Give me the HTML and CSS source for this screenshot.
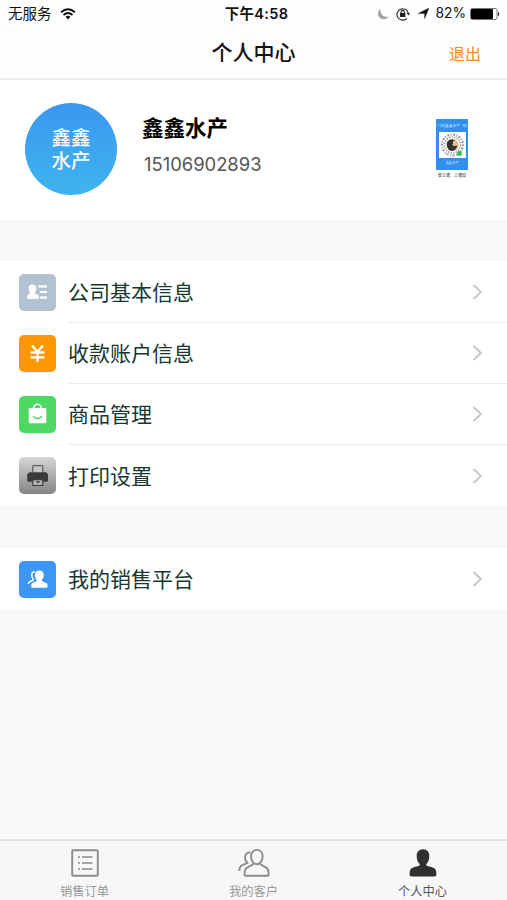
FILE: index.html
```html
<!DOCTYPE html>
<html lang="zh-CN">
<head>
  <meta charset="UTF-8" />
  <meta name="viewport" content="width=device-width, initial-scale=1.0"/>
  <title>个人中心</title>
  <link rel="stylesheet" href="styles.css">
</head>
<body>
  <div class="page">

    <header class="top">
      <div class="status">
        <div class="status-left">
          <span>无服务</span>
          <svg width="16" height="12" viewBox="0 0 16 12" fill="none" stroke="#111" stroke-width="1.9">
            <path d="M1 4.3Q8-2 15 4.3M3.5 7Q8 3.1 12.5 7"/>
            <path d="M8 11.5 5.5 8.8Q8 6.9 10.5 8.8Z" fill="#111" stroke="none"/>
          </svg>
        </div>
        <div class="time">下午4:58</div>
        <div class="status-right">
          <svg width="12" height="12" viewBox="0 0 12 12"><path d="M3.6.8A5.7 5.7 0 1 0 11.6 8.4C7 10 2.4 6 3.6.8Z" fill="#a2a2a2"/></svg>
          <svg class="lock" width="14" height="14" viewBox="0 0 14 14" fill="none" stroke="#222" stroke-width="1.1">
            <path d="M10.9 11.3A5.7 5.7 0 1 1 12.3 6.3"/>
            <path d="M10.7 6.1h3.3l-1.6 2.5Z" fill="#222" stroke="none"/>
            <rect x="4" y="6" width="5.4" height="4" fill="#222" stroke="none"/>
            <path d="M5.1 6.4V5a1.6 1.6 0 0 1 3.2 0v1.4"/>
          </svg>
          <svg class="arrow" width="11" height="11" viewBox="0 0 11 11"><path d="M11 0 6.6 10.8V5.6H0Z" fill="#111" stroke="#111" stroke-width=".3"/></svg>
          <span class="percent">82%</span>
          <svg width="30" height="12" viewBox="0 0 30 12">
            <rect x=".5" y=".5" width="26.5" height="11" rx="2" fill="#fff" stroke="#777"/>
            <rect x="1" y="1" width="22" height="10" rx="1" fill="#000"/>
            <path d="M28 3.5q2.5 2.5 0 5Z" fill="#222"/>
          </svg>
        </div>
      </div>
      <div class="nav">
        <h1>个人中心</h1>
        <a class="logout">退出</a>
      </div>
    </header>

    <section class="profile">
      <div class="avatar">鑫鑫<br>水产</div>
      <div class="user">
        <h2>鑫鑫水产</h2>
        <p>15106902893</p>
      </div>
      <div class="poster">
        <div class="poster-card">
          <span class="poster-title">门向鑫鑫水产 -码</span>
          <svg width="27" height="26" viewBox="0 0 27 26">
            <rect width="27" height="26" fill="#fff"/>
            <g fill="none" stroke="#999">
              <circle cx="13.5" cy="13" r="10.5" stroke-width="2.2" stroke-dasharray="1 1.6 2 1.3"/>
              <circle cx="13.5" cy="13" r="8" stroke-width="1.5" stroke-dasharray="1.4 1.2"/>
            </g>
            <circle cx="13.5" cy="13" r="6" fill="#c9a58b"/>
            <path d="M8 10q4-5 8-1l-3 4 5 1q-1 5-6 5-5-2-4-9Z" fill="#38302d"/>
            <path d="M14 9q5 0 5 4l-5 1Z" fill="#e6c48e"/>
            <circle cx="20.5" cy="21.5" r="2.5" fill="#35bf68"/>
          </svg>
          <span class="poster-name">鑫鑫水产</span>
        </div>
        <span class="poster-note">智立通、上通知</span>
      </div>
    </section>

    <ul class="menu">
      <li>
        <svg class="icon" viewBox="0 0 37 37">
          <rect width="37" height="37" rx="5" fill="#b2c2d2"/>
          <path d="M13.3 10.6c2.7 0 4 1.6 4 3.8 0 1.7-.5 2.900-1.400 3.800v1.200l2.800 1.300c.8.4 1 1 1 2.100v1.400q0 .8-.8.8H8.800q-.8 0-.8-.8v-1.400c0-1.100.3-1.700 1-2.100l1.900-1.100v-1.400c-.9-.9-1.400-2.100-1.400-3.800 0-2.200 1.200-3.800 3.800-3.800Z" fill="#fff"/>
          <path d="M19.5 12.3H28M21 18h7M21 23.7h7" stroke="#fff" stroke-width="2.2"/>
        </svg>
        <div class="cell"><span>公司基本信息</span><svg class="chevron" viewBox="0 0 10 16"><path d="M1 1l7.5 7L1 15"/></svg></div>
      </li>
      <li>
        <svg class="icon" viewBox="0 0 37 37">
          <rect width="37" height="37" rx="5" fill="#ff9800"/>
          <path d="M13 10.5l5.5 6.3 5.5-6.3M11.5 17.5h14M11.5 22.3h14M18.5 17v9.8" fill="none" stroke="#fff" stroke-width="2.3"/>
        </svg>
        <div class="cell"><span>收款账户信息</span><svg class="chevron" viewBox="0 0 10 16"><path d="M1 1l7.5 7L1 15"/></svg></div>
      </li>
      <li>
        <svg class="icon" viewBox="0 0 37 37">
          <rect width="37" height="37" rx="5" fill="#4bd964"/>
          <path d="M14.8 13v-1a3.7 3.7 0 0 1 7.4 0v1" fill="none" stroke="#fff" stroke-width="1.5"/>
          <rect x="9.7" y="12" width="17.6" height="15.3" rx="1" fill="#fff"/>
          <path d="M14 20q4.5 5 9 0" fill="none" stroke="#4bd964" stroke-width="1.4"/>
        </svg>
        <div class="cell"><span>商品管理</span><svg class="chevron" viewBox="0 0 10 16"><path d="M1 1l7.5 7L1 15"/></svg></div>
      </li>
      <li>
        <svg class="icon" viewBox="0 0 37 37">
          <defs>
            <linearGradient id="silver" x1="0" y1="0" x2="0" y2="1">
              <stop offset="0" stop-color="#d6d6d6"/>
              <stop offset="1" stop-color="#858585"/>
            </linearGradient>
          </defs>
          <rect width="37" height="37" rx="5" fill="url(#silver)"/>
          <path d="M13.8 16V8.7h10V16" fill="#c5c5c5" stroke="#4a4a4c"/>
          <path d="M10.5 15.2h16.5l2 2v6.2q0 1.3-1.3 1.3H9.5q-1.3 0-1.3-1.3v-6.2Z" fill="#3b3b3e"/>
          <path d="M13.8 22.8h10v5.7h-10Z" fill="#b5b5b5" stroke="#3b3b3e" stroke-width="1.1"/>
          <path d="M16.7 24.2h4.5l-2.2 2.4Z" fill="#3b3b3e"/>
        </svg>
        <div class="cell"><span>打印设置</span><svg class="chevron" viewBox="0 0 10 16"><path d="M1 1l7.5 7L1 15"/></svg></div>
      </li>
    </ul>

    <ul class="menu">
      <li>
        <svg class="icon" viewBox="0 0 37 37">
          <rect width="37" height="37" rx="5" fill="#3c96f5"/>
          <path d="M20.3 9.5c2.9 0 4.4 1.9 4.4 4.5 0 2-.7 3.8-1.9 4.8v1.3l4.4 1.9c1 .4 1.3 1.1 1.3 2.2v1.6q0 1-1 1H13.3q-1 0-1-1v-1.6c0-1.1.3-1.8 1.3-2.2l4-1.9v-1.3c-1.2-1-1.8-2.8-1.8-4.8 0-2.6 1.6-4.5 4.5-4.5Z" fill="#fff"/>
          <path d="M15.8 10.8c-2-.2-3 1.2-3 3.3 0 1.8.5 3 1.3 3.9v1.2l-3.5 1.6c-1 .5-1.2 1-1.2 2.3" fill="none" stroke="#fff" stroke-width="1.5"/>
        </svg>
        <div class="cell"><span>我的销售平台</span><svg class="chevron" viewBox="0 0 10 16"><path d="M1 1l7.5 7L1 15"/></svg></div>
      </li>
    </ul>

    <nav class="tabbar">
      <a class="tab">
        <svg width="30" height="30" viewBox="0 0 30 30" fill="none" stroke="#8c8c8c">
          <rect x="2.2" y="2.2" width="25.6" height="25.6" rx="1" stroke-width="1.9"/>
          <path d="M8 9h2m2 0h10.5M8 15h2m2 0h10.5M8 21h2m2 0h10.5" stroke-width="1.7"/>
        </svg>
        <span>销售订单</span>
      </a>
      <a class="tab">
        <svg width="32" height="30" viewBox="0 0 32 30" fill="none" stroke="#8c8c8c" stroke-width="1.9" stroke-linejoin="round">
          <path d="M18.8 1.9c3.7 0 5.8 2.9 5.8 6.6 0 4.1-2.4 7.7-5.8 7.7S13 12.6 13 8.5c0-3.7 2.1-6.6 5.8-6.6Z"/>
          <path d="M15.4 15.8c-1.2 1.7-5.3 2.6-7.2 4.5-1.6 1.5-1.7 3.7-1.7 5.9q0 1.6 1.6 1.6h21q1.6 0 1.6-1.6c0-2.2-.1-4.4-1.7-5.9-1.9-1.9-5.6-2.8-6.8-4.5"/>
          <path d="M12.2 4.5C9 4 7 6.5 7 9.3c0 2.5.8 4.3 2.6 5.7-2.3 1.2-5.4 1.8-6.9 3.2-1.2 1.2-1.3 2.7-1.3 4.8"/>
        </svg>
        <span>我的客户</span>
      </a>
      <a class="tab active">
        <svg width="30" height="30" viewBox="0 0 30 30">
          <path d="M15 1.2c4.3 0 6.3 3 6.3 6.7 0 3.5-1 6.4-3 8v1.5c1.5.9 6.4 1.3 8.4 3.1 1.5 1.4 1.7 3.4 1.7 5.7 0 1.5-.6 2.2-2 2.2H3.6c-1.4 0-2-.7-2-2.2 0-2.3.2-4.3 1.7-5.7 2-1.8 6.9-2.2 8.4-3.1v-1.5c-2-1.6-3-4.5-3-8 0-3.7 2-6.7 6.3-6.7Z" fill="#303030"/>
        </svg>
        <span>个人中心</span>
      </a>
    </nav>

  </div>
</body>
</html>
```
FILE: styles.css
```css
* {margin: 0;padding: 0;box-sizing: border-box;}

body {
  font-family: Inter, 'Noto Sans CJK SC', sans-serif;
  background: #f8f8f8;
  color: #111;
}

svg {display: block;flex-shrink: 0;}
ul {list-style: none;}

.page {
  display: flex;
  flex-direction: column;
  height: 100vh;
  min-height: 900px;
}

/* Status bar and title */
.top {
  height: 80px;
  background: #fdfdfd;
  border-bottom: 2px solid #ededed;
}

.status {
  display: grid;
  grid-template-columns: 1fr auto 1fr;
  align-items: center;
  height: 27px;
  padding: 0 7px 0 8px;
  font-size: 14.5px;
  line-height: 27px;
}

.status-left, .status-right {display: flex;align-items: center;}
.status-left {gap: 8px;}
.status-right {justify-content: flex-end;}
.time {padding-left: 5px;font-weight: 600;letter-spacing: 0.3px;}
.lock {margin-left: 7px;}
.arrow {margin-left: 8px;}
.percent {margin: 0 4px 0 7px;font-size: 13.8px;}

.nav {
  display: grid;
  grid-template-columns: 1fr auto 1fr;
  align-items: center;
  height: 51px;
  padding-right: 26px;
  padding-left: 26px;
}

.nav h1 {
  grid-column: 2;
  font-size: 21px;
  font-weight: 500;
  line-height: 51px;
}

.logout {
  justify-self: end;
  font-size: 16px;
  color: #ff8a1c;
}

/* Profile */
.profile {
  display: flex;
  height: 140px;
  padding: 23px 39px 0 25px;
  background: #fff;
}

.avatar {
  width: 92px;
  height: 92px;
  padding-top: 24px;
  border-radius: 50%;
  background: linear-gradient(#3b97f0, #3eb5ee);
  color: #fff;
  font-size: 19.5px;
  font-weight: 500;
  line-height: 23px;
  text-align: center;
}

.user {flex: 1;padding: 10px 0 0 25px;}
.user h2 {font-size: 21.5px;font-weight: 700;line-height: 30px;color: #000;}
.user p {margin-top: 7px;padding-left: 2px;font-size: 18.4px;line-height: 28px;color: #555;}

.poster {
  display: flex;
  flex-direction: column;
  align-items: center;
  width: 32px;
  padding-top: 16px;
  white-space: nowrap;
}

.poster-card {
  display: flex;
  flex-direction: column;
  align-items: center;
  width: 32px;
  height: 51px;
  background: #318ff1;
  color: #d9ebff;
}

.poster-title {font-size: 3.8px;line-height: 13px;}
.poster-name {font-size: 3.2px;line-height: 11px;}
.poster-note {font-size: 4px;line-height: 12px;color: #333;}

/* Menu */
.menu {margin-top: 41px;background: #fff;}
.menu + .menu {margin-top: 42px;}

.menu li {
  display: flex;
  align-items: center;
  height: 61px;
  padding-left: 19px;
}

.menu li:first-child {height: 62px;}
.icon {width: 37px;height: 37px;margin-right: 12px;}

.cell {
  display: flex;
  flex: 1;
  align-items: center;
  justify-content: space-between;
  height: 100%;
  padding-right: 24px;
  border-bottom: 1px solid #ebebeb;
  font-size: 21px;
  line-height: 30px;
  color: #17372f;
}

.cell span {margin-top: 2px;}
.menu li:last-child .cell {border-bottom: none;}

.chevron {
  width: 11px;
  height: 16px;
  fill: none;
  stroke: #c5c5c8;
  stroke-width: 1.8;
}

/* Bottom tabs */
.tabbar {
  display: flex;
  height: 61px;
  margin-top: auto;
  border-top: 2px solid #e3e3e3;
  background: #f7f7f7;
}

.tab {
  display: flex;
  flex: 1;
  flex-direction: column;
  align-items: center;
  padding-top: 7px;
  font-size: 12.3px;
  line-height: 18px;
  color: #999;
}

.tab span {margin-top: 5px;}
.tab.active {color: #555;}
```
